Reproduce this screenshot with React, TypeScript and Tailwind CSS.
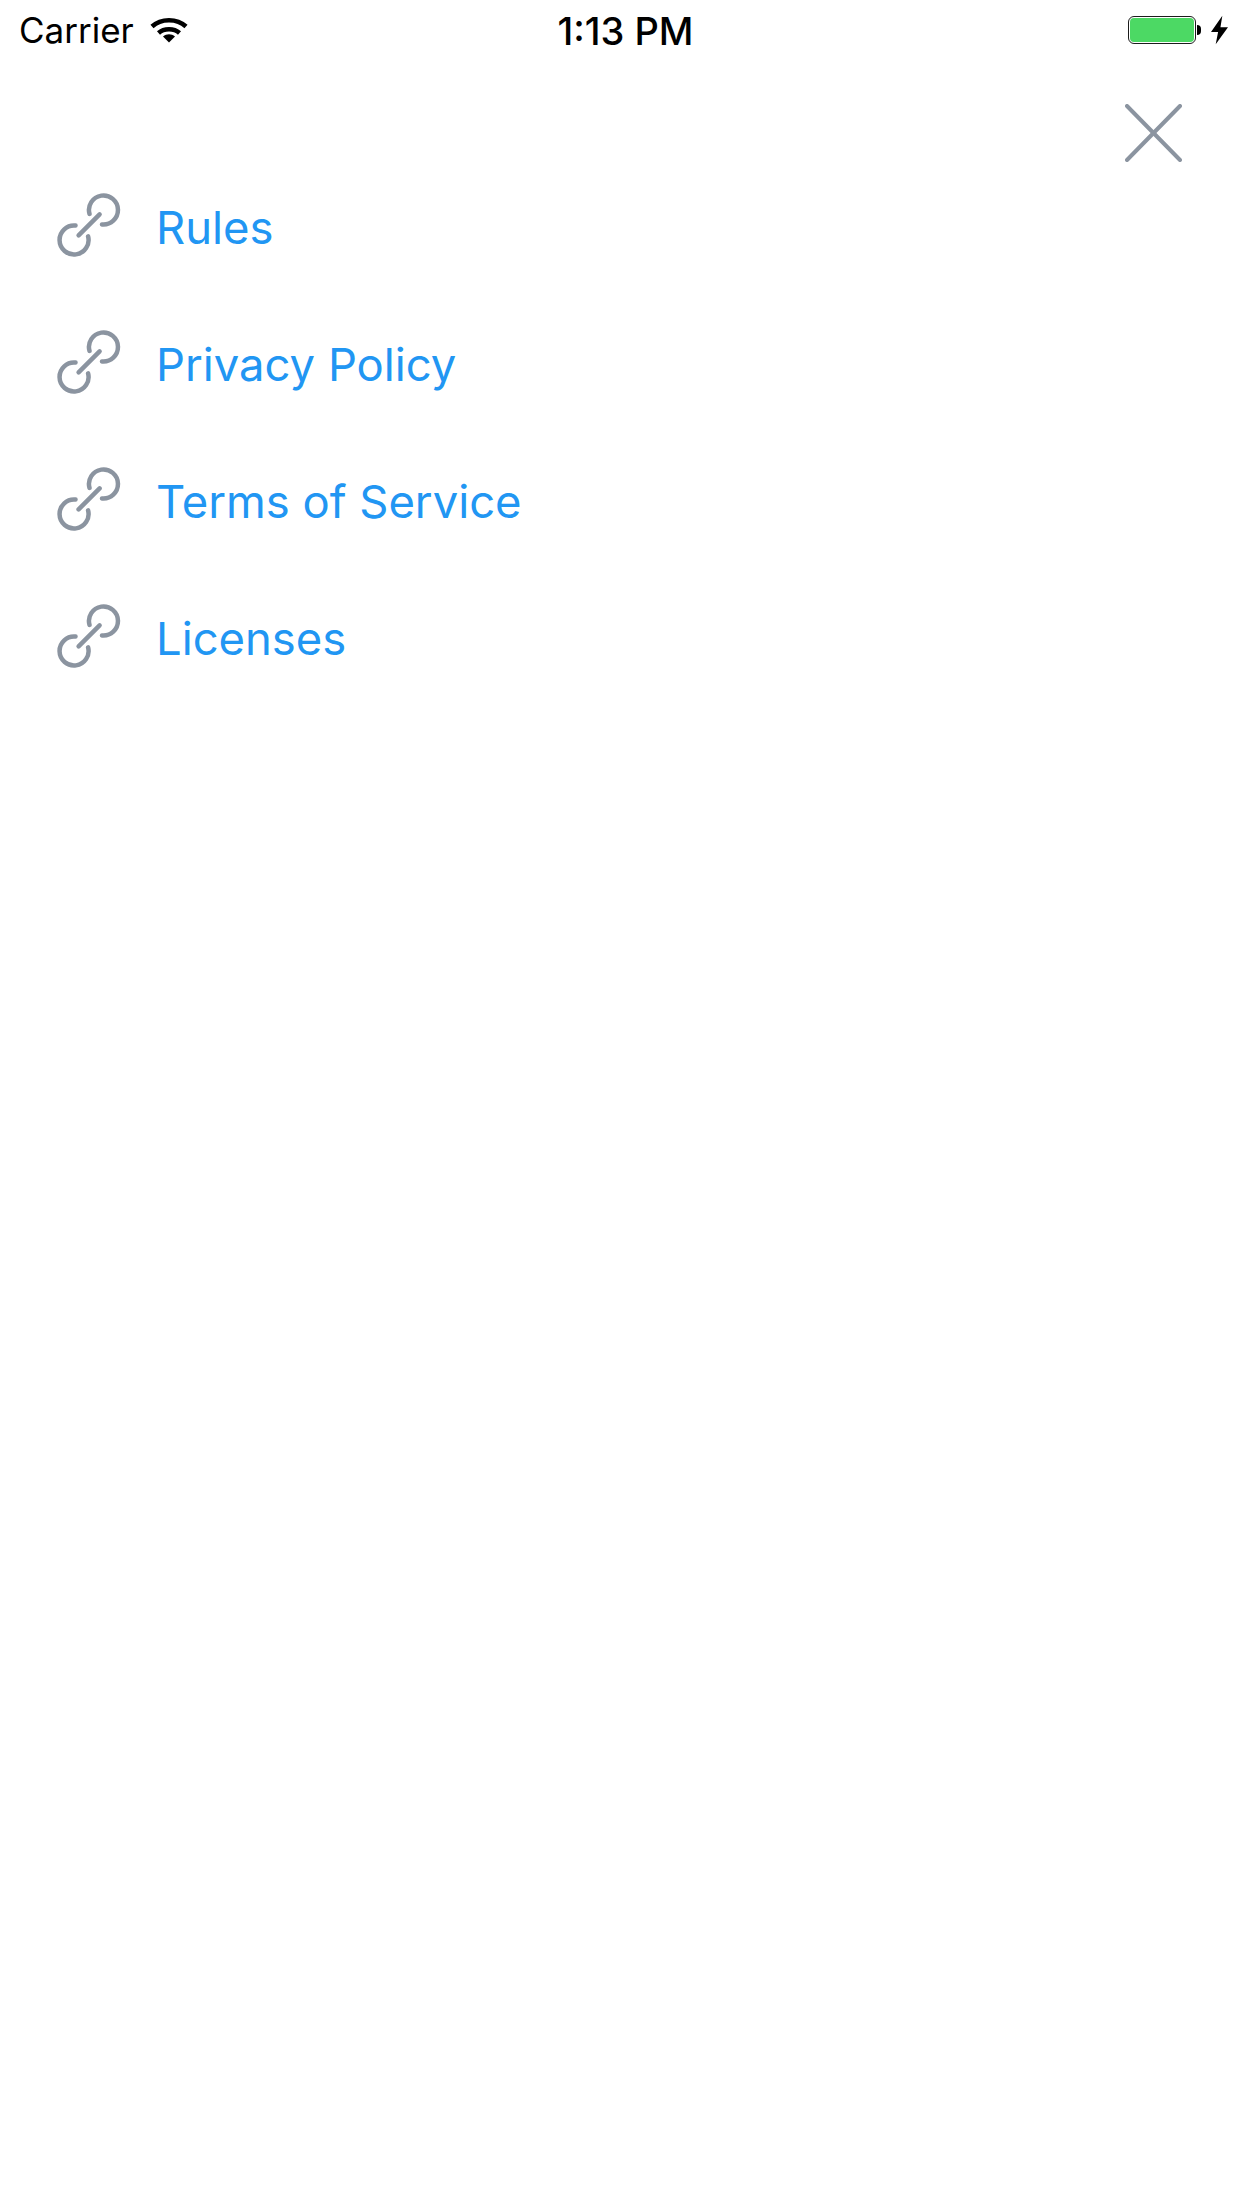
const links = ['Rules', 'Privacy Policy', 'Terms of Service', 'Licenses'];

function LinkIcon() {
  return (
    <svg viewBox="0 0 64 64" fill="none" stroke="#8b94a0" strokeWidth="4.5" strokeLinecap="round" className="h-16 w-16 shrink-0">
      <path d="M32.5 20.9A14.5 14.5 0 1 1 45 31.4" />
      <path d="M21.6 42.4L42.6 21.4" />
      <path d="M18.5 32.6A14.5 14.5 0 1 0 31.1 43.4" />
    </svg>
  );
}

function StatusBar() {
  return (
    <div className="flex h-[60px] items-center justify-between pl-[19px] pr-[14px] text-black">
      <div className="flex flex-1 items-center">
        <span className="text-[35px] leading-none">Carrier</span>
        <svg viewBox="0 0 38 28" className="ml-[16px] h-7 w-[38px]" fill="none" stroke="#000" strokeWidth="4.5">
          <path d="M2 10.5C11 2 27 2 36 10.5" />
          <path d="M8.5 17C14 12 24 12 29.5 17" />
          <path d="M13 20.5L19 26.5L25 20.5C21.5 17.5 16.5 17.5 13 20.5Z" fill="#000" stroke="none" />
        </svg>
      </div>
      <span className="ml-[4px] mt-[2px] text-[38px] leading-none font-medium">1:13 PM</span>
      <div className="flex flex-1 items-center justify-end">
        <div className="h-7 w-[68px] rounded-[6px] border-[1.5px] border-[#1c1c1c] p-px">
          <div className="h-full w-full rounded-[4px] bg-[#4cd964]" />
        </div>
        <div className="ml-px h-[10px] w-[4px] rounded-r-[4px] bg-black" />
        <svg viewBox="0 0 18 30" className="ml-[10px] h-[30px] w-[17px]" fill="#000">
          <path d="M12 0L0 17H7.5L5 30L18 12H10Z" />
        </svg>
      </div>
    </div>
  );
}

export default function App() {
  return (
    <div className="min-h-[2208px] bg-white font-['Inter',sans-serif]">
      <StatusBar />
      <div className="flex h-[99px] items-start justify-end pr-[60px] pt-[44px]">
        <svg viewBox="0 0 57 58" fill="none" stroke="#8b94a0" strokeWidth="4" strokeLinecap="round" className="h-[58px] w-[57px]">
          <path d="M2 2L55 56" />
          <path d="M55 2L2 56" />
        </svg>
      </div>
      <ul>
        {links.map((link) => (
          <li key={link} className="flex h-[137px] items-center gap-[35px] pl-[57px]">
            <span className="-mt-[6px]">
              <LinkIcon />
            </span>
            <span className="mt-px text-[45.4px] leading-none text-[#2196f3]">{link}</span>
          </li>
        ))}
      </ul>
    </div>
  );
}
